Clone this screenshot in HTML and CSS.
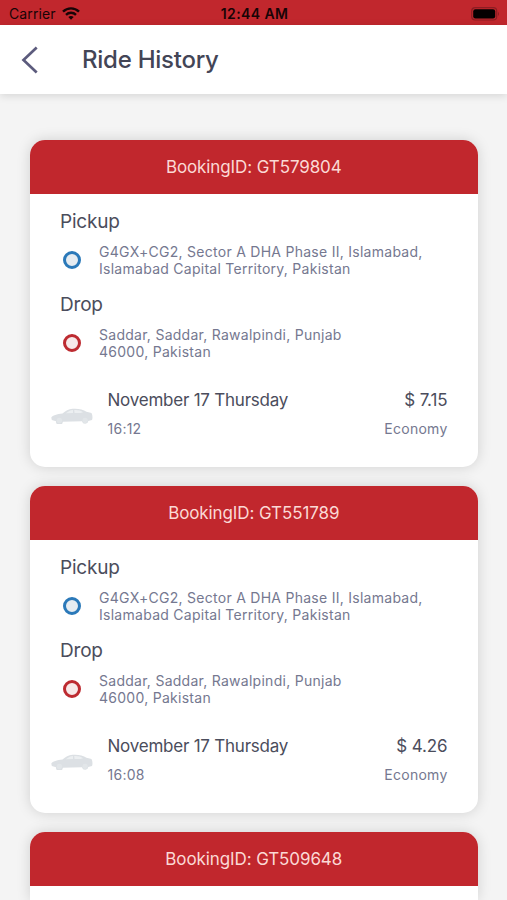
FILE: index.html
```html
<!DOCTYPE html>
<html lang="en">
<head>
<meta charset="utf-8">
<title>Ride History</title>
<link rel="stylesheet" href="styles.css">
</head>
<body>
<svg class="defs" width="0" height="0" aria-hidden="true">
  <symbol id="car" viewBox="0 0 42 16">
    <path fill="#dce0e4" d="M0.3 9.6C1.5 7.2 6 6 11.5 5.4C14.5 3 17.5 1 21.5 0.8C27 0.4 32 1.2 35.5 3.8L40.5 5C41.6 7 41.8 10 41 12L37.3 13A3.2 3.2 0 0 1 31 13.3L11.800 13.700A3.400 3.400 0 0 1 5 13.300L0.800 12Z"/>
    <path fill="#eceff1" d="M15 5.3C17.3 3.4 19.2 2.2 22 2V5.1ZM23.2 2C27 1.8 29.8 2.4 32 4.2L29.5 4.900L23.500 5.100Z"/>
    <circle cx="8.400" cy="12.500" r="2.700" fill="#e2e6e9"/>
    <circle cx="34.100" cy="12.300" r="2.600" fill="#e2e6e9"/>
  </symbol>
</svg>
<div class="status">
  <div class="carrier"><span>Carrier</span>
    <svg width="18" height="13" viewBox="0 0 18 13" fill="none" stroke="#170406" stroke-width="2.400"><path d="M1 4.700C5.500.300 12.500.300 17 4.700M4 7.800C6.800 5.100 11.200 5.100 14 7.800"/><path fill="#170406" stroke="none" d="M6.300 10Q9 7.900 11.700 10L9 12.700Z"/></svg>
  </div>
  <div class="clock">12:44 AM</div>
  <svg class="battery" width="29" height="14" viewBox="0 0 29 14"><rect x=".7" y=".7" width="25" height="12.300" rx="3.500" fill="none" stroke="#8d1d23" stroke-width="1.200"/><rect x="2.200" y="2.200" width="22" height="9.300" rx="2.200" fill="#050001"/><path d="M27 4.800Q29 7 27 9Z" fill="#8d1d23"/></svg>
</div>
<header class="bar">
  <svg width="18" height="28" viewBox="0 0 18 28" fill="none" stroke="#5c5b7d" stroke-width="2.700"><path d="M15.700 1.500L2.500 14L15.700 26.500"/></svg>
  <h1>Ride History</h1>
</header>
<main class="list">
  <article class="card">
    <div class="booking">BookingID: GT579804</div>
    <div class="body">
      <h2 class="pickup-title">Pickup</h2>
      <div class="stop"><i class="dot blue"></i><p>G4GX+CG2, Sector A DHA Phase II, Islamabad,<br>Islamabad Capital Territory, Pakistan</p></div>
      <h2 class="drop-title">Drop</h2>
      <div class="stop"><i class="dot red"></i><p>Saddar, Saddar, Rawalpindi, Punjab<br>46000, Pakistan</p></div>
      <div class="trip">
        <svg class="car" width="42" height="16"><use href="#car"/></svg>
        <div class="when"><div class="main">November 17 Thursday</div><div class="sub">16:12</div></div>
        <div class="cost"><div class="main">$ 7.15</div><div class="sub">Economy</div></div>
      </div>
    </div>
  </article>
  <article class="card">
    <div class="booking">BookingID: GT551789</div>
    <div class="body">
      <h2 class="pickup-title">Pickup</h2>
      <div class="stop"><i class="dot blue"></i><p>G4GX+CG2, Sector A DHA Phase II, Islamabad,<br>Islamabad Capital Territory, Pakistan</p></div>
      <h2 class="drop-title">Drop</h2>
      <div class="stop"><i class="dot red"></i><p>Saddar, Saddar, Rawalpindi, Punjab<br>46000, Pakistan</p></div>
      <div class="trip">
        <svg class="car" width="42" height="16"><use href="#car"/></svg>
        <div class="when"><div class="main">November 17 Thursday</div><div class="sub">16:08</div></div>
        <div class="cost"><div class="main">$ 4.26</div><div class="sub">Economy</div></div>
      </div>
    </div>
  </article>
  <article class="card">
    <div class="booking">BookingID: GT509648</div>
    <div class="body"></div>
  </article>
</main>
</body>
</html>
```
FILE: styles.css
```css
* { box-sizing: border-box; }
body {
  margin: 0;
  height: 900px;
  overflow: hidden;
  background: #f4f4f4;
  font-family: Inter, "Liberation Sans", sans-serif;
  color: #4b4d5c;
  display: flex;
  flex-direction: column;
}
.defs { position: absolute; }
h1, h2, p { margin: 0; }
.status {
  flex: none;
  height: 25px;
  padding: 2px 7px 0 9px;
  background: #c1272d;
  color: #170406;
  display: grid;
  grid-template-columns: 1fr auto 1fr;
  align-items: center;
  font-size: 14px;
  line-height: 22px;
}
.carrier { display: flex; align-items: center; gap: 6px; letter-spacing: 0.1px; }
.clock { font-weight: 600; letter-spacing: 0.4px; }
.battery { justify-self: end; }
.bar {
  flex: none;
  position: relative;
  height: 69px;
  padding-left: 21px;
  background: #fff;
  display: flex;
  align-items: center;
  gap: 43px;
  box-shadow: 0 2px 8px rgba(0, 0, 0, 0.12);
}
.bar h1 {
  font-size: 24px;
  line-height: 30px;
  font-weight: 500;
  color: #434556;
  letter-spacing: -0.25px;
}
.list {
  flex: 1;
  min-height: 0;
  overflow: hidden;
  padding: 46px 29.500px 0 30px;
  display: flex;
  flex-direction: column;
  gap: 19.500px;
}
.card {
  flex: none;
  height: 326.700px;
  border-radius: 15px;
  background: #fff;
  box-shadow: 0 0 14px rgba(0, 0, 0, 0.15);
}
.card:last-child { height: 67.600px; border-radius: 15px 15px 0 0; }
.booking {
  height: 54px;
  border-radius: 15px 15px 0 0;
  background: #c1272d;
  color: #fbd9d5;
  font-size: 17px;
  line-height: 55px;
  letter-spacing: -0.1px;
  text-align: center;
}
.body { padding: 15px 30px 0; }
.card:last-child .body { padding: 0; }
.body h2 { font-size: 19px; line-height: 25px; font-weight: 400; letter-spacing: -0.2px; }
.body .drop-title { margin-top: 15px; }
.stop { display: flex; align-items: center; gap: 18px; margin-top: 9px; padding-left: 3px; }
.stop p {
  font-size: 14px;
  line-height: 17px;
  color: #757890;
  letter-spacing: 0.27px;
  white-space: nowrap;
}
.dot { flex: none; width: 18px; height: 18px; border: 3px solid; border-radius: 50%; }
.blue { border-color: #2b79b9; background: #e6ecf1; }
.red { border-color: #bd2b31; background: #f7e9e9; }
.trip { display: flex; margin: 28px 0 0 -9px; }
.car { flex: none; margin: 20px 14.500px 0 0; }
.main { font-size: 17px; line-height: 24px; letter-spacing: -0.23px; }
.cost .main { letter-spacing: -0.1px; }
.sub { margin-top: 7px; font-size: 14px; line-height: 20px; color: #757890; letter-spacing: 0.25px; }
.cost { margin-left: auto; text-align: right; }
```
